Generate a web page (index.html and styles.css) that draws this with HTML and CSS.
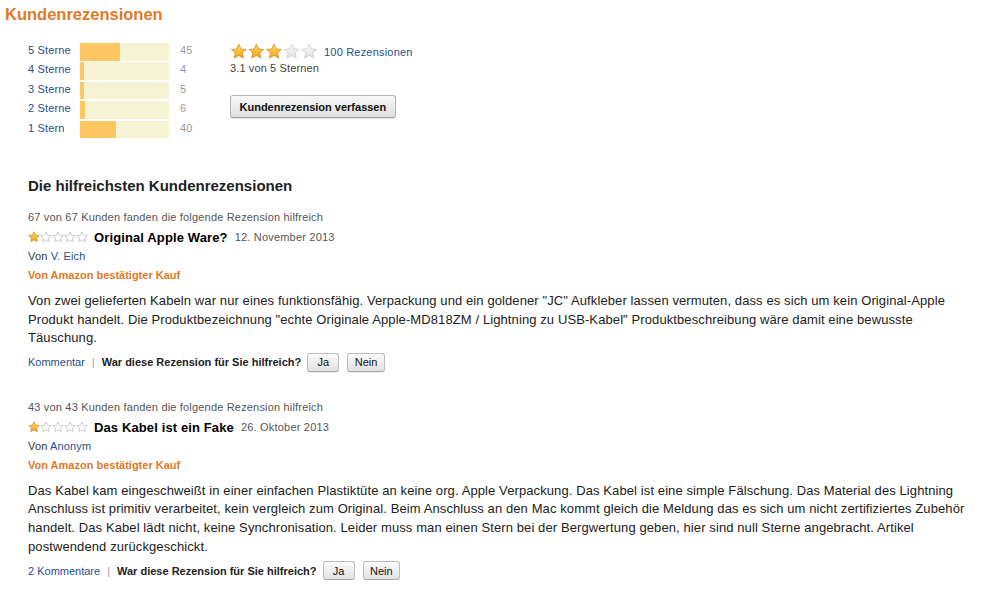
FILE: index.html
```html
<!DOCTYPE html>
<html lang="de">
<head>
<meta charset="utf-8">
<title>Kundenrezensionen</title>
<link rel="stylesheet" href="styles.css">
</head>
<body>
<svg class="defs" width="0" height="0" aria-hidden="true">
  <defs>
    <linearGradient id="gold" x1="0" y1="0" x2="0" y2="1">
      <stop offset="0" stop-color="#ffdc70"/>
      <stop offset="0.55" stop-color="#f9bd3a"/>
      <stop offset="1" stop-color="#ee9f1e"/>
    </linearGradient>
    <linearGradient id="grey" x1="0" y1="0" x2="0" y2="1">
      <stop offset="0" stop-color="#fbfbfb"/>
      <stop offset="1" stop-color="#dedede"/>
    </linearGradient>
    <symbol id="star" viewBox="0 0 24 24">
      <polygon points="12,1.6 15.1,8.4 22.4,9.1 16.9,14 18.5,21.3 12,17.5 5.5,21.3 7.1,14 1.6,9.1 8.9,8.4"/>
    </symbol>
  </defs>
</svg>

<div class="page">
  <h2 class="title">Kundenrezensionen</h2>

  <div class="summary">
    <div class="histogram">
      <div class="hrow"><a class="hlabel" href="#">5 Sterne</a><div class="bar"><div class="fill" style="width:45%"></div></div><span class="count">45</span></div>
      <div class="hrow"><a class="hlabel" href="#">4 Sterne</a><div class="bar"><div class="fill" style="width:4%"></div></div><span class="count">4</span></div>
      <div class="hrow"><a class="hlabel" href="#">3 Sterne</a><div class="bar"><div class="fill" style="width:5%"></div></div><span class="count">5</span></div>
      <div class="hrow"><a class="hlabel" href="#">2 Sterne</a><div class="bar"><div class="fill" style="width:6%"></div></div><span class="count">6</span></div>
      <div class="hrow"><a class="hlabel" href="#">1 Stern</a><div class="bar"><div class="fill" style="width:40%"></div></div><span class="count">40</span></div>
    </div>

    <div class="overview">
      <div class="avg-row">
        <svg class="stars-big" width="88" height="17" viewBox="0 0 88 17">
          <use href="#star" x="0" y="0" width="17.6" height="17" fill="url(#gold)" stroke="#d38d18" stroke-width="1.1"/>
          <use href="#star" x="17.6" y="0" width="17.6" height="17" fill="url(#gold)" stroke="#d38d18" stroke-width="1.1"/>
          <use href="#star" x="35.2" y="0" width="17.6" height="17" fill="url(#gold)" stroke="#d38d18" stroke-width="1.1"/>
          <use href="#star" x="52.8" y="0" width="17.6" height="17" fill="url(#grey)" stroke="#cacaca" stroke-width="1.1"/>
          <use href="#star" x="70.4" y="0" width="17.6" height="17" fill="url(#grey)" stroke="#cacaca" stroke-width="1.1"/>
        </svg>
        <a class="link" href="#">100 Rezensionen</a>
      </div>
      <div class="avg-text">3.1 von 5 Sternen</div>
      <button class="btn-write" type="button">Kundenrezension verfassen</button>
    </div>
  </div>

  <h3 class="most-helpful">Die hilfreichsten Kundenrezensionen</h3>

  <div class="review">
    <div class="helpful">67 von 67 Kunden fanden die folgende Rezension hilfreich</div>
    <div class="review-head">
      <svg class="stars-small" width="60" height="12" viewBox="0 0 60 12">
        <use href="#star" x="0" y="0" width="12" height="12" fill="url(#gold)" stroke="#c7851a" stroke-width="1.4"/>
        <use href="#star" x="12" y="0" width="12" height="12" fill="#fff" stroke="#b9b9b9" stroke-width="1.4"/>
        <use href="#star" x="24" y="0" width="12" height="12" fill="#fff" stroke="#b9b9b9" stroke-width="1.4"/>
        <use href="#star" x="36" y="0" width="12" height="12" fill="#fff" stroke="#b9b9b9" stroke-width="1.4"/>
        <use href="#star" x="48" y="0" width="12" height="12" fill="#fff" stroke="#b9b9b9" stroke-width="1.4"/>
      </svg>
      <span class="review-title">Original Apple Ware?</span>
      <span class="review-date">12. November 2013</span>
    </div>
    <div class="author">Von <a class="link" href="#">V. Eich</a></div>
    <div class="verified">Von Amazon bestätigter Kauf</div>
    <p class="review-text">Von zwei gelieferten Kabeln war nur eines funktionsfähig. Verpackung und ein goldener "JC" Aufkleber lassen vermuten, dass es sich um kein Original-Apple Produkt handelt. Die Produktbezeichnung "echte Originale Apple-MD818ZM / Lightning zu USB-Kabel" Produktbeschreibung wäre damit eine bewusste Täuschung.</p>
    <div class="review-foot">
      <a class="link" href="#">Kommentar</a>
      <span class="sep">|</span>
      <span class="question">War diese Rezension für Sie hilfreich?</span>
      <button class="btn-vote btn-ja" type="button">Ja</button>
      <button class="btn-vote" type="button">Nein</button>
    </div>
  </div>

  <div class="review">
    <div class="helpful">43 von 43 Kunden fanden die folgende Rezension hilfreich</div>
    <div class="review-head">
      <svg class="stars-small" width="60" height="12" viewBox="0 0 60 12">
        <use href="#star" x="0" y="0" width="12" height="12" fill="url(#gold)" stroke="#c7851a" stroke-width="1.4"/>
        <use href="#star" x="12" y="0" width="12" height="12" fill="#fff" stroke="#b9b9b9" stroke-width="1.4"/>
        <use href="#star" x="24" y="0" width="12" height="12" fill="#fff" stroke="#b9b9b9" stroke-width="1.4"/>
        <use href="#star" x="36" y="0" width="12" height="12" fill="#fff" stroke="#b9b9b9" stroke-width="1.4"/>
        <use href="#star" x="48" y="0" width="12" height="12" fill="#fff" stroke="#b9b9b9" stroke-width="1.4"/>
      </svg>
      <span class="review-title">Das Kabel ist ein Fake</span>
      <span class="review-date">26. Oktober 2013</span>
    </div>
    <div class="author">Von <a class="link" href="#">Anonym</a></div>
    <div class="verified">Von Amazon bestätigter Kauf</div>
    <p class="review-text">Das Kabel kam eingeschweißt in einer einfachen Plastiktüte an keine org. Apple Verpackung. Das Kabel ist eine simple Fälschung. Das Material des Lightning Anschluss ist primitiv verarbeitet, kein vergleich zum Original. Beim Anschluss an den Mac kommt gleich die Meldung das es sich um nicht zertifiziertes Zubehör handelt. Das Kabel lädt nicht, keine Synchronisation. Leider muss man einen Stern bei der Bergwertung geben, hier sind null Sterne angebracht. Artikel postwendend zurückgeschickt.</p>
    <div class="review-foot">
      <a class="link" href="#">2 Kommentare</a>
      <span class="sep">|</span>
      <span class="question">War diese Rezension für Sie hilfreich?</span>
      <button class="btn-vote btn-ja" type="button">Ja</button>
      <button class="btn-vote" type="button">Nein</button>
    </div>
  </div>
</div>
</body>
</html>
```

FILE: styles.css
```css
* {
  box-sizing: border-box;
}

html, body {
  margin: 0;
  padding: 0;
  background: #ffffff;
}

body {
  font-family: "Liberation Sans", Arial, Helvetica, sans-serif;
  color: #333333;
  font-size: 11px;
}

.defs {
  display: block;
  width: 0;
  height: 0;
  overflow: hidden;
}

.page {
  width: 990px;
  padding: 4px 0 0 28px;
}

.link {
  color: #1f4f8f;
  text-decoration: none;
}

.title {
  margin: 0 0 0 -23px;
  font-size: 16.5px;
  line-height: 20px;
  font-weight: bold;
  color: #df7a26;
}

/* summary */
.summary {
  display: flex;
  align-items: flex-start;
  margin-top: 19px;
}

.histogram {
  width: 202px;
  display: flex;
  flex-direction: column;
}

.hrow {
  display: flex;
  align-items: flex-start;
  height: 19.4px;
}

.hlabel {
  width: 52px;
  font-size: 11px;
  line-height: 14px;
  letter-spacing: 0.15px;
  color: #1f4f8f;
  text-decoration: none;
}

.bar {
  width: 89px;
  height: 17.5px;
  background: #f5f3d4;
}

.fill {
  height: 100%;
  background: #ffc762;
}

.count {
  margin-left: 11px;
  line-height: 14px;
  color: #999999;
  font-size: 11px;
  letter-spacing: 0.15px;
}

.overview {
  display: flex;
  flex-direction: column;
  align-items: flex-start;
}

.avg-row {
  display: flex;
  align-items: center;
  height: 17px;
}

.stars-big {
  display: block;
}

.avg-row .link {
  margin-left: 6px;
  font-size: 11px;
  letter-spacing: 0.2px;
  line-height: 19px;
  padding-top: 2px;
}

.avg-text {
  margin-top: 1px;
  font-size: 11px;
  line-height: 15px;
  letter-spacing: 0.12px;
  color: #444444;
}

.btn-write {
  margin-top: 19px;
  height: 23px;
  padding: 0 8.5px;
  font-family: "Liberation Sans", Arial, sans-serif;
  font-size: 11px;
  font-weight: bold;
  color: #111111;
  background: linear-gradient(#f8f8f8, #dedede);
  border: 1px solid #b4b4b4;
  border-bottom-color: #9e9e9e;
  border-radius: 3px;
  box-shadow: 0 1px 1px rgba(0, 0, 0, 0.12);
}

/* reviews */
.most-helpful {
  margin: 37px 0 0 0;
  font-size: 15px;
  line-height: 18px;
  font-weight: bold;
  color: #222222;
}

.review {
  margin-top: 13px;
}

.review + .review {
  margin-top: 26px;
}

.helpful {
  line-height: 19px;
  letter-spacing: 0.18px;
  color: #555555;
}

.review-head {
  display: flex;
  align-items: center;
  height: 19px;
  margin-top: 1px;
}

.stars-small {
  display: block;
  margin-right: 6px;
}

.review-title {
  font-size: 13px;
  font-weight: bold;
  letter-spacing: 0.12px;
  color: #000000;
}

.review-date {
  margin-left: 7px;
  letter-spacing: 0.2px;
  color: #555555;
}

.author {
  line-height: 19px;
  letter-spacing: 0.15px;
  color: #333333;
}

.verified {
  line-height: 19px;
  font-weight: bold;
  color: #df7a26;
}

.review-text {
  margin: 7px 0 0 0;
  width: 945px;
  font-size: 13px;
  line-height: 18.6px;
  letter-spacing: 0.1px;
  color: #222222;
}

.review-foot {
  display: flex;
  align-items: center;
  height: 19px;
  margin-top: 5px;
}

.sep {
  margin: 0 7px;
  color: #999999;
}

.question {
  font-weight: bold;
  color: #222222;
  margin-right: 6px;
}

.btn-vote {
  height: 19px;
  padding: 0 6.5px;
  margin-right: 8px;
  font-family: "Liberation Sans", Arial, sans-serif;
  font-size: 11px;
  color: #111111;
  background: linear-gradient(#fafafa, #e2e2e2);
  border: 1px solid #bdbdbd;
  border-bottom-color: #a8a8a8;
  border-radius: 3px;
  box-shadow: 0 1px 1px rgba(0, 0, 0, 0.08);
}

.btn-ja {
  min-width: 32px;
}
```
